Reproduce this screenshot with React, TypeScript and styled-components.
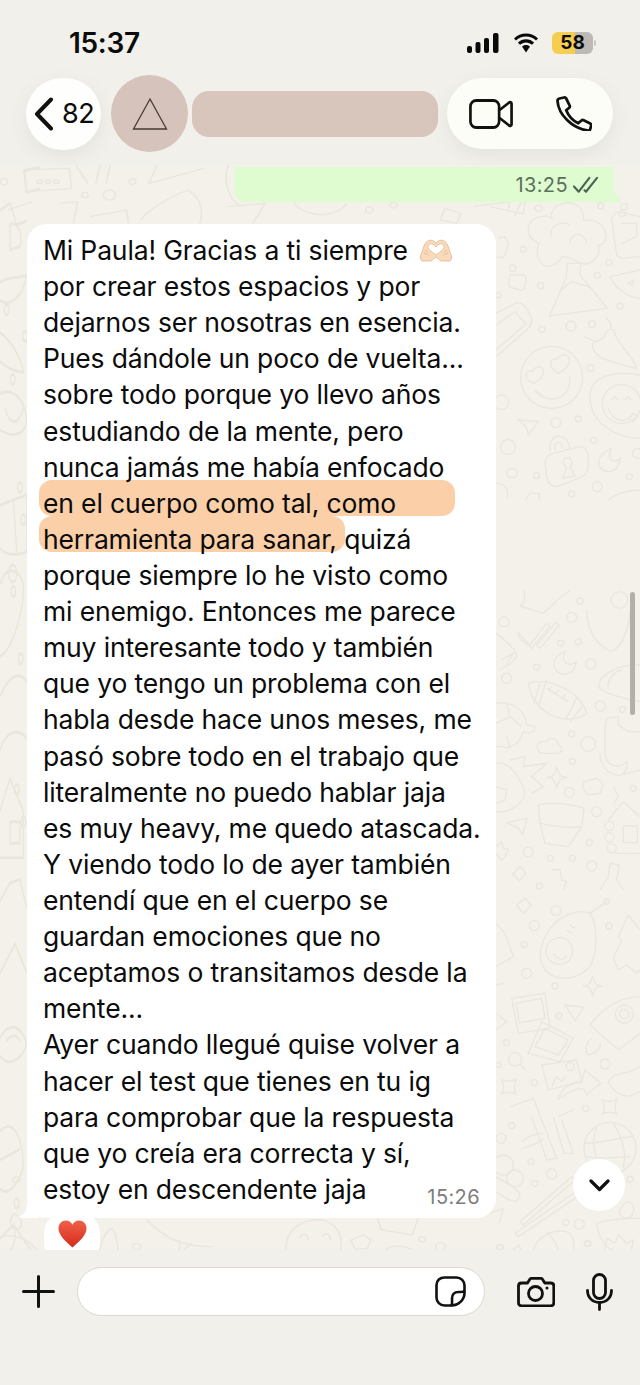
import React from "react";
import styled, { createGlobalStyle } from "styled-components";

const GlobalStyle = createGlobalStyle`
  html, body {
    margin: 0;
    padding: 0;
    width: 640px;
    height: 1385px;
    overflow: hidden;
    background: #f1f0eb;
  }
`;

const lines = [
  "por crear estos espacios y por",
  "dejarnos ser nosotras en esencia.",
  "Pues dándole un poco de vuelta...",
  "sobre todo porque yo llevo años",
  "estudiando de la mente, pero",
  "nunca jamás me había enfocado",
];

const linesAfter = [
  "porque siempre lo he visto como",
  "mi enemigo. Entonces me parece",
  "muy interesante todo y también",
  "que yo tengo un problema con el",
  "habla desde hace unos meses, me",
  "pasó sobre todo en el trabajo que",
  "literalmente no puedo hablar jaja",
  "es muy heavy, me quedo atascada.",
  "Y viendo todo lo de ayer también",
  "entendí que en el cuerpo se",
  "guardan emociones que no",
  "aceptamos o transitamos desde la",
  "mente...",
  "Ayer cuando llegué quise volver a",
  "hacer el test que tienes en tu ig",
  "para comprobar que la respuesta",
  "que yo creía era correcta y sí,",
];

// wallpaper doodles, traced from crops of the picture: each group keeps the crop's own coordinates
type Group = { transform: string; dots: number[][]; paths: string[] };

const star = (x: number, y: number, r: number) =>
  `M${x} ${y - r} C${x + r * 0.2} ${y - r * 0.2} ${x + r * 0.3} ${y} ${x + r} ${y} C${x + r * 0.3} ${y + r * 0.1} ${x + r * 0.2} ${y + r * 0.3} ${x} ${y + r} C${x - r * 0.2} ${y + r * 0.3} ${x - r * 0.3} ${y} ${x - r} ${y} C${x - r * 0.3} ${y} ${x - r * 0.2} ${y - r * 0.2} ${x} ${y - r}Z`;

const doodles: Group[] = [
  {
    transform: "translate(490 200) scale(.3333)",
    dots: [[100,148,9],[357,188,9],[322,226,9],[152,257,9],[390,318,9],[156,388,9],[243,378,15],[306,373,10],[302,504,10],[197,668,15],[265,657,9],[311,721,9],[54,741,22],[66,819,15],[139,827,9],[322,860,15],[245,882,9],[418,830,9],[332,18,9],[34,607,22],[443,760,15],[25,286,8],[185,532,93],[395,612,58],[68,205,10],[403,20,10]],
    paths: [
      "M160 195 C130 170 145 130 150 130 C105 120 100 60 150 50 C170 45 180 50 185 55 C175 10 250 -10 275 30 C285 55 280 60 280 62 C330 50 365 100 340 130 C335 135 330 135 325 135 C335 170 300 200 270 190 C250 175 225 170 215 170 C205 195 175 205 160 195Z",
      "M185 110 C175 80 210 60 240 75 M240 130 C240 100 280 90 290 130",
      "M178 348 L228 235 L232 190 L272 190 L270 225 L352 325 Z",
      "M208 275 C225 265 240 240 250 245 C260 245 265 255 275 255 C290 255 300 262 310 270",
      "M60 225 L100 225 Q110 228 108 240 L102 265 Q98 272 90 270 L62 262 Q54 258 55 250 Z",
      "M18 340 L80 308 Q100 305 115 335 Q135 365 115 385 L18 470 M18 375 L75 335 L108 372 L18 450",
      "M127 515 C105 505 100 540 130 550 C165 535 170 500 145 500 C135 500 130 510 127 515Z",
      "M200 478 C180 470 170 500 205 520 C240 505 250 465 222 465 C212 465 205 470 200 478Z",
      "M135 570 C165 610 240 610 240 530",
      "M450 715 C380 715 300 670 300 590 C300 530 370 510 450 525",
      "M355 625 C370 670 410 670 430 640 M365 600 L375 590 L385 600 M405 600 L415 590 L425 600 M415 655 L430 665 L442 650 L428 638",
      "M280 410 C300 415 305 420 315 425 C295 440 320 470 350 480 C380 490 410 500 440 505 C430 470 400 450 375 405 C378 385 350 380 345 405 C335 425 325 420 315 425",
      "M345 352 C360 360 365 370 362 385",
      "M85 660 L145 665 L115 705 L108 680 Z",
      "M190 760 L270 740 Q290 740 295 765 L295 800 Q290 830 265 835 L200 860 Q175 860 170 830 L165 790 Q165 765 190 760Z",
      "M180 755 C170 700 230 690 240 745 M195 750 C190 720 215 720 218 745",
      "M225 775 C240 765 255 790 240 800 L255 828 L218 835 L230 802 C220 795 215 785 225 775Z",
      "M365 745 C320 760 310 810 355 815 C375 815 390 795 390 775 C375 790 345 785 365 745Z",
      "M450 210 L360 230 C380 270 420 295 450 295 M415 250 L430 240 L428 255Z",
      "M450 50 L380 35 L365 55 L380 165 L395 175 L450 170 M395 70 L440 70 L440 110 L395 130",
      "M0 20 L100 42 L105 5 M60 5 L55 30",
      "M25 115 L45 110 L55 130 L45 165 Q35 178 20 170",
      "M18 850 C45 850 60 870 50 895",
      "M105 900 L120 880 L148 880 L148 900",
      "M355 900 C380 880 420 870 450 870",
    ],
  },
  {
    transform: "translate(490 590) scale(.3333)",
    dots: [[42,95,15],[245,82,15],[212,160,9],[265,155,9],[302,222,15],[140,232,9],[50,265,15],[331,348,15],[397,358,9],[245,432,9],[295,462,22],[247,514,9],[430,595,9],[238,607,15],[320,665,15],[298,758,9],[115,786,15],[181,805,9],[247,805,9],[305,828,15],[148,888,9],[270,33,9],[388,30,25],[358,708,14],[358,742,14],[365,775,14]],
    paths: [
      "M85 130 L120 165 L170 100 L180 108 L125 175 L88 145 Z M140 165 L198 97 L208 105 L150 175Z",
      "M225 185 C180 200 180 250 225 253 C245 250 258 235 258 215 C245 230 210 225 225 185Z",
      "M115 280 C170 260 270 300 290 370 C240 410 130 380 115 280Z",
      "M150 280 L130 345 M170 270 L145 350 M260 325 L225 392 M280 345 L240 395 M170 295 L235 335 M175 300 L187 288 M195 312 L207 300 M215 325 L227 313",
      "M18 340 C70 330 110 370 110 405 L135 410 C135 430 115 430 100 425 C90 460 60 480 40 470 L18 470 M18 400 L60 380 L95 410 M60 380 L50 340 M50 440 L60 475",
      "M145 480 C130 460 165 450 170 455 C180 435 205 450 205 465 C225 470 215 495 195 490 L160 490 C150 490 145 485 145 480Z",
      star(200, 562, 32),
      "M290 60 C290 120 320 170 365 185 C400 170 420 100 420 60",
      "M450 225 C380 220 325 260 325 290 C335 310 400 325 450 335 M355 300 C350 270 370 245 395 240",
      "M345 490 L345 420 L350 385 L385 380 L385 405 L415 425 L450 425 M450 540 L395 555",
      "M330 490 C330 530 360 560 395 555 C410 545 415 525 410 515 C390 540 350 530 345 490",
      "M18 520 C60 510 95 570 105 610 C95 650 50 670 18 665 M60 510 L105 500 L100 530 L170 520 L125 560 L160 590 L125 610 M18 590 L50 600 L45 630 L18 640",
      "M145 645 C190 630 270 650 282 655 L275 710 L235 770 L165 760 L150 700 Z M150 700 C200 710 240 715 275 710",
      "M50 698 L110 685 L98 735 L85 715Z",
      "M280 575 L320 565 Q340 575 338 590 L330 610 L295 615 Q275 600 280 575Z",
      "M450 680 L400 635 L355 690 M400 708 L442 708 L442 758 L400 758Z M375 790 L450 790 M370 590 L385 620 L370 640",
      "M18 770 L35 755 L40 775 L55 778 L45 800 L35 810 L18 790",
      "M90 830 L108 850 L88 872 L68 853Z",
      "M185 840 L210 838 L215 870 L230 875 L220 900",
      "M360 820 L388 825 L380 870 L400 900 M360 820 L355 860 L330 900",
      "M18 130 C50 150 85 190 80 200 C60 230 40 230 30 240 M35 210 L70 190 L50 225",
      "M100 0 C110 30 100 40 90 48 L160 70 C190 40 220 15 240 0",
    ],
  },
  {
    transform: "translate(490 890) scale(.3333)",
    dots: [[197,62,15],[133,107,15],[103,163,9],[357,108,9],[110,250,15],[195,288,9],[207,378,9],[50,458,9],[345,522,15],[133,578,9],[25,525,8],[287,655,9],[65,707,9],[33,745,15],[123,815,9],[185,852,15],[135,880,9],[420,868,9],[227,997,9],[268,1003,15],[293,1060,9],[30,1072,8],[208,183,40],[350,35,8],[403,372,27],[403,372,14],[75,508,20],[360,775,78],[40,825,30],[75,865,25],[240,530,12]],
    paths: [
      "M300 70 C320 100 325 170 305 220 C280 265 210 280 170 245 C130 200 160 130 205 90 C240 65 280 60 300 70Z M300 70 L350 35",
      "M230 120 L245 130 M240 105 L255 115 M190 190 C205 215 225 210 230 195",
      "M415 75 L385 140 L395 150 L370 205 L385 240 L410 225 L440 250 L450 240 M415 75 L450 120",
      star(308, 287, 30),
      "M225 345 L282 352 L255 392Z",
      "M300 405 C340 350 400 320 450 320 M300 405 L385 480 L450 430",
      "M305 445 C285 460 285 490 295 495 C320 490 335 470 330 460",
      "M65 325 L165 310 L180 415 L85 430Z M78 340 L155 325 L165 385 L88 398Z",
      "M155 395 L250 445 L210 515 L115 490Z M165 415 L235 450 L205 495 L135 470Z",
      "M155 525 L260 510 L275 575 L175 600Z M185 590 L200 560 L215 575 L225 560",
      "M205 628 C215 590 250 575 275 575 L285 540 L332 580 L290 615 L280 595 C250 595 225 615 205 628Z",
      "M90 522 L105 540",
      "M35 570 C50 575 65 575 78 567 C72 585 72 600 78 612 C65 605 50 605 35 612 C42 600 42 585 35 570Z",
      "M338 630 C350 635 365 635 380 628 C374 645 374 658 380 672 C365 665 350 665 338 672 C345 658 345 645 338 630Z",
      "M62 650 L130 625 L200 805 L170 810 L125 680 M205 680 L250 660 M215 690 L250 790 L222 790 L190 680",
      "M95 755 C120 735 140 730 160 730 M100 775 C125 765 150 760 160 745",
      "M285 760 C330 760 400 740 430 740 M320 710 C300 770 320 820 340 840 M370 700 C400 750 410 790 400 835 M290 800 C330 810 380 800 420 800",
      "M18 860 C50 880 90 900 90 915 C85 945 60 935 18 905",
      "M90 995 L245 860 L255 870 L100 1005Z M75 1030 L265 900 L270 915 L85 1040Z",
      "M130 1080 C140 1040 190 1015 230 1025 C250 1035 255 1060 250 1080 M170 1025 C190 1045 200 1065 205 1080",
      "M390 960 C400 940 420 920 430 950 C435 975 420 985 405 985 C395 980 385 975 390 960Z",
      "M320 1000 C360 985 420 985 450 985 M320 1000 C325 1040 345 1075 370 1080 M345 1080 L350 1045 L375 1060 L385 1035 L410 1060 L430 1050 L425 1080",
      "M0 970 L40 955 L28 1000",
      "M355 575 C370 550 400 550 420 545 L450 530 M355 575 C365 600 395 620 420 618 L450 605",
      "M18 100 L45 130 L70 200 L18 230 M18 285 L40 280 M18 370 L50 395 L18 420",
      "M105 25 L80 45 L100 70 L125 45Z M70 1080 L85 1065 L95 1080",
    ],
  },
  {
    // strips above and below the big bubble
    transform: "scale(.408 .3333)",
    dots: [[97,545,6],[118,545,6],[138,545,6],[325,545,8],[268,585,15],[208,585,8],[905,630,9],[965,615,9],[1430,590,9],[1320,625,9],[1525,640,9],[10,545,9]],
    paths: [
      "M60 510 L170 505 L175 565 L65 575Z",
      "M185 495 L215 550 M245 495 L235 550 M270 495 L260 550",
      "M385 495 L365 550 L500 505",
      "M345 660 C370 620 420 590 460 570 C490 590 500 630 490 670",
      "M560 495 C545 540 560 600 590 620 M560 620 L650 610 L620 670",
      "M720 610 C760 660 830 650 850 610",
      "M1090 625 L1130 640 L1120 670 L1080 660Z M1160 620 L1280 600 L1260 650",
      "M20 630 L80 605 M150 610 L190 605 L180 670 M220 650 L310 630 L315 670",
    ],
  },
  {
    transform: "translate(0 1150) scale(.408 .3333)",
    dots: [[335,290,10],[1035,268,8],[1225,292,8],[1440,282,8],[1080,290,12],[40,90,9]],
    paths: [
      "M360 210 C400 260 440 290 520 290 M440 270 L440 300 M470 280 L450 300",
      "M700 300 C700 230 750 205 790 210 C830 225 840 260 835 300",
      "M735 265 C740 245 755 250 755 270 M790 260 C795 245 810 250 810 270",
      "M860 270 L890 255 L910 270 L900 295 L870 298Z",
      "M925 205 L935 240 L1010 255 L1025 205",
      "M945 300 C960 280 1000 290 1010 300",
      "M245 300 C250 260 265 240 275 235 C290 260 285 280 290 300",
      "M0 260 C40 250 70 270 90 300 M35 190 C20 210 25 235 40 240 C55 235 60 210 35 190Z",
    ],
  },
  {
    // left edge, the pattern wrapping round
    transform: "translate(0 160) scale(.3333 .7194)",
    dots: [[20,208,7],[75,245,7],[38,305,7],[60,455,7],[40,600,7],[62,693,7],[50,875,7],[70,920,7],[50,1450,7],[38,575,12],[70,500,7]],
    paths: [
      "M70 15 L120 10 M70 15 L80 45 L120 40",
      "M0 70 L30 60 L50 90 L80 85 M30 90 C50 85 70 100 60 120 L30 125 Z",
      "M0 170 C30 160 60 165 80 160 C70 190 30 205 0 195",
      "M0 240 C30 250 60 270 70 295 C40 295 10 285 0 280",
      "M0 325 C40 315 80 335 80 365 C70 385 30 385 0 375 M15 345 C30 370 55 370 70 345",
      "M0 480 L80 465 L80 545 C50 550 20 550 0 540 M40 470 L50 545",
      "M0 590 C20 560 60 570 70 590 C75 620 40 680 0 690",
      "M0 745 C30 715 60 710 80 725 M0 820 C20 790 60 790 80 805",
      "M0 905 L30 860 L70 905 L70 970 L0 970 M30 920 L60 920 L60 950 L30 950Z",
      "M0 1030 L30 1005 L60 1000 L80 1040 M0 1130 L45 1090 L80 1130",
      "M0 1220 C30 1195 70 1205 80 1230 C60 1255 20 1260 0 1245 M20 1225 C30 1215 50 1215 60 1225",
      "M0 1350 C40 1330 70 1360 70 1400 C50 1430 20 1440 0 1430 M0 1390 L60 1375",
      "M0 1500 L40 1480 L100 1520 M40 1480 C60 1510 20 1525 0 1520",
    ],
  },
];

const Doodles = () => (
  <Wallpaper viewBox="0 165 640 1085" aria-hidden="true">
    {doodles.map((g, i) => (
      <g key={i} transform={g.transform}>
        {g.dots.map(([x, y, r], j) => (
          <circle key={j} cx={x} cy={y} r={r} />
        ))}
        {g.paths.map((d, j) => (
          <path key={j} d={d} />
        ))}
      </g>
    ))}
  </Wallpaper>
);

const SignalIcon = () => (
  <svg width="33" height="20" viewBox="0 0 33 20" fill="#0a0a0a">
    <rect x="0" y="13" width="5" height="7" rx="2" />
    <rect x="8.5" y="9" width="5" height="11" rx="2" />
    <rect x="17" y="5" width="5" height="15" rx="2" />
    <rect x="26" y="0" width="5.5" height="20" rx="2" />
  </svg>
);

const WifiIcon = () => (
  <svg width="28" height="20" viewBox="0 0 28 20" fill="#0a0a0a">
    <path d="M14 3.600c3.900 0 7.400 1.500 10 4l2-2.200C22.800 2.200 18.600.4 14 .4S5.200 2.200 2 5.400l2 2.200c2.600-2.500 6.100-4 10-4Z" />
    <path d="M14 9.400c2.300 0 4.400.9 6 2.400l2.100-2.300C20 7.400 17.100 6.200 14 6.200S8 7.400 5.900 9.500L8 11.800c1.600-1.500 3.700-2.400 6-2.400Z" />
    <path d="M14 12c-1.600 0-3 .6-4 1.600l4 6 4-6c-1-1-2.400-1.600-4-1.600Z" />
  </svg>
);

const ChevronLeft = () => (
  <svg width="20" height="34" viewBox="0 0 20 34" fill="none" stroke="#111" strokeWidth="4" strokeLinecap="round" strokeLinejoin="round">
    <path d="M17 2.500 3 17l14 14.500" />
  </svg>
);

const VideoIcon = () => (
  <svg width="44" height="30" viewBox="0 0 46 30" preserveAspectRatio="none" fill="none" stroke="#111" strokeWidth="2.800" strokeLinejoin="round">
    <rect x="1.500" y="1.500" width="30" height="27" rx="6" />
    <path d="M32 11 42 3.500c1-.7 2.500-.2 2.500 1.200v20.600c0 1.400-1.500 1.900-2.500 1.200L32 19" />
  </svg>
);

const PhoneIcon = () => (
  <svg width="36" height="35" viewBox="0 0 36 35" fill="none" stroke="#111" strokeWidth="2.800" strokeLinejoin="round">
    <path d="M3.500 2.500 8 1.500c1-.2 1.800.2 2.200 1l3.400 7c.4.800.2 1.600-.4 2.200l-3 2.600c2.200 5.500 6.500 10.300 12 13l3.300-2.800c.6-.5 1.400-.6 2.200-.2l6.500 3.300c.8.400 1.200 1.200 1 2.100l-1 3.500c-.3 1-1.100 1.500-2.100 1.400C16.500 32.500 2.500 19 1.500 5c0-1.200.7-2.200 2-2.500Z" />
  </svg>
);

const CheckIcon = () => (
  <svg width="25" height="18" viewBox="0 0 26 18" fill="none" stroke="#4c6352" strokeWidth="2.200" strokeLinecap="round" strokeLinejoin="round">
    <path d="M1 10.500 6 16 17 1.500M12 14.500l1.500 1.500L25 1.500" />
  </svg>
);

const HeartHands = () => (
  <svg width="34" height="24" viewBox="0 0 34 24">
    <path
      d="M17 19 12 23H3L1 20 5 8C7 2 13 0 17 5 21 0 27 2 29 8l4 12-2 3H22ZM17 17C12 13 8 11 9 8 10 5 15 5 17 9 19 5 24 5 25 8 26 11 22 13 17 17Z"
      fill="#f9dabb"
      fillRule="evenodd"
      stroke="#e3b48d"
      strokeWidth="0.8"
    />
    <path d="M6 12 9 14M5 15l5 2M28 12l-3 2M29 15l-5 2" fill="none" stroke="#e3b48d" strokeWidth="0.8" />
  </svg>
);

const HeartIcon = () => (
  <svg width="29" height="28" viewBox="0 0 29 28">
    <defs>
      <linearGradient id="heart" x1="0" y1="0" x2="0" y2="1">
        <stop offset="0" stopColor="#f0604a" />
        <stop offset="1" stopColor="#d52c1c" />
      </linearGradient>
    </defs>
    <path d="M14.500 27.500C8 21.500.5 15.500.5 8.500.5 3.500 4 .5 8 .5c3 0 5.300 1.700 6.500 4.300C15.700 2.200 18 .5 21 .5c4 0 7.500 3 7.500 8 0 7-7.500 13-14 19Z" fill="url(#heart)" />
  </svg>
);

const PlusIcon = () => (
  <svg width="33" height="33" viewBox="0 0 33 33" stroke="#111" strokeWidth="3" strokeLinecap="round">
    <path d="M16.500 1.500v30M1.500 16.500h30" />
  </svg>
);

const StickerIcon = () => (
  <svg width="31" height="31" viewBox="0 0 31 31" fill="none" stroke="#111" strokeWidth="2.600" strokeLinejoin="round">
    <path d="M9.500 1.500h12c4.500 0 8 3.500 8 8v7.500c0 7-6.500 12.500-12.500 12.500H9.500c-4.500 0-8-3.500-8-8v-12.500c0-4.500 3.500-7.500 8-7.500Z" />
    <path d="M29.500 15c-1.500 1.500-3.500 1-6 1-4.500 0-6.500 3-6.500 6.500 0 2.500.5 5-.5 7" />
  </svg>
);

const CameraIcon = () => (
  <svg width="38" height="30" viewBox="0 0 38 30" fill="none" stroke="#111" strokeWidth="2.800" strokeLinejoin="round">
    <path d="M4.500 6h6l2.500-4c.4-.5.800-.6 1.400-.6h9.500c.6 0 1 .1 1.400.6l2.500 4h6c1.800 0 3 1.200 3 3v17c0 1.800-1.200 2.800-3 2.800h-29.300c-1.800 0-3-1-3-2.800V9c0-1.800 1.200-3 3-3Z" />
    <circle cx="18.500" cy="16.500" r="7" />
    <circle cx="30" cy="11" r="1.500" fill="#111" stroke="none" />
  </svg>
);

const MicIcon = () => (
  <svg width="27" height="38" viewBox="0 0 27 38" fill="none" stroke="#111" strokeWidth="2.800" strokeLinecap="round">
    <rect x="7.500" y="1.500" width="12" height="24" rx="6" />
    <path d="M1.500 17.500c0 7 5 12 12 12s12-5 12-12M13.500 29.500v7" />
  </svg>
);

const ChevronDown = () => (
  <svg width="21" height="13" viewBox="0 0 21 13" fill="none" stroke="#111" strokeWidth="3.200" strokeLinecap="round" strokeLinejoin="round">
    <path d="m2 2 8.500 8.500L19 2" />
  </svg>
);

export default function App() {
  return (
    <Screen>
      <GlobalStyle />
      <StatusBar>
        <Clock>15:37</Clock>
        <StatusIcons>
          <SignalIcon />
          <WifiIcon />
          <Battery>
            <BatteryLevel>58</BatteryLevel>
          </Battery>
        </StatusIcons>
      </StatusBar>

      <Header>
        <BackPill>
          <ChevronLeft />
          <UnreadCount>82</UnreadCount>
        </BackPill>
        <Avatar>
          <svg width="36" height="34" viewBox="0 0 36 34" fill="none" stroke="#453a36" strokeWidth="1.300">
            <path d="M18 2 34.500 32H1.500Z" />
          </svg>
        </Avatar>
        <NamePlaceholder />
        <CallPill>
          <VideoIcon />
          <PhoneIcon />
        </CallPill>
      </Header>

      <Chat>
        <Doodles />
        <SentBubble>
          <SentTime>13:25</SentTime>
          <CheckIcon />
        </SentBubble>
        <Bubble>
          <FirstLine>
            Mi Paula! Gracias a ti siempre
            <HeartHands />
          </FirstLine>
          {lines.map((line) => (
            <Line key={line}>{line}</Line>
          ))}
          <Line>
            <Mark $width={416}>en el cuerpo como tal, como</Mark>
          </Line>
          <Line>
            <Mark $width={306}>herramienta para sanar,</Mark> quizá
          </Line>
          {linesAfter.map((line) => (
            <Line key={line}>{line}</Line>
          ))}
          <LastLine>
            estoy en descendente jaja
            <BubbleTime>15:26</BubbleTime>
          </LastLine>
        </Bubble>
        <Reaction>
          <HeartIcon />
        </Reaction>
        <ScrollThumb />
        <DownButton>
          <ChevronDown />
        </DownButton>
      </Chat>

      <Composer>
        <PlusIcon />
        <InputBox>
          <StickerIcon />
        </InputBox>
        <ComposerActions>
          <CameraIcon />
          <MicIcon />
        </ComposerActions>
      </Composer>
    </Screen>
  );
}

const Screen = styled.div`
  display: flex;
  flex-direction: column;
  width: 640px;
  height: 1385px;
  overflow: hidden;
  background: #f1f0eb;
  color: #0b0b0b;
  font-family: Inter, "Liberation Sans", sans-serif;
`;

const StatusBar = styled.div`
  display: flex;
  align-items: center;
  justify-content: space-between;
  height: 75px;
  padding: 10px 47px 0 69px;
  box-sizing: border-box;
`;

const Clock = styled.span`
  font-size: 28px;
  font-weight: 600;
  letter-spacing: -0.3px;
`;

const StatusIcons = styled.div`
  display: flex;
  align-items: center;
  gap: 12px;
`;

const Battery = styled.div`
  position: relative;
  display: flex;
  align-items: center;
  justify-content: center;
  width: 41px;
  height: 22px;
  border-radius: 6px;
  background: linear-gradient(90deg, #f5cd4f 0 56%, #bdbab5 56% 100%);

  &::after {
    content: "";
    position: absolute;
    top: 8px;
    right: -3px;
    width: 2px;
    height: 6px;
    border-radius: 0 2px 2px 0;
    background: #c9c7c2;
  }
`;

const BatteryLevel = styled.span`
  font-size: 19px;
  font-weight: 700;
`;

const Header = styled.div`
  display: flex;
  align-items: center;
  height: 77px;
  margin-bottom: 13px;
  padding-left: 26px;
`;

const BackPill = styled.div`
  display: flex;
  align-items: center;
  gap: 8px;
  width: 75px;
  height: 72px;
  padding-left: 8px;
  box-sizing: border-box;
  border-radius: 36px;
  background: #fefefc;
  box-shadow: 0 6px 18px rgba(120, 120, 110, 0.1);
`;

const UnreadCount = styled.span`
  font-size: 27px;
  letter-spacing: -0.5px;
`;

const Avatar = styled.div`
  display: flex;
  align-items: center;
  justify-content: center;
  width: 77px;
  height: 77px;
  margin-left: 10px;
  border-radius: 50%;
  background: #d6c3bb;
`;

const NamePlaceholder = styled.div`
  width: 246px;
  height: 46px;
  margin-left: 4px;
  border-radius: 17px;
  background: #d8c5bc;
`;

const CallPill = styled.div`
  display: flex;
  align-items: center;
  justify-content: space-between;
  width: 166px;
  height: 71px;
  margin-left: 9px;
  padding: 0 21px 0 22px;
  box-sizing: border-box;
  border-radius: 36px;
  background: #fdfdf7;
  box-shadow: 0 6px 18px rgba(120, 120, 110, 0.1);
`;

const Chat = styled.div`
  position: relative;
  flex: 1;
  overflow: hidden;
  padding-top: 2px;
  background: #f4f1eb;
`;

const Wallpaper = styled.svg`
  position: absolute;
  inset: 0;
  width: 640px;
  height: 1085px;
  fill: none;
  stroke: #e9e6dd;
  stroke-width: 4;
`;

const SentBubble = styled.div`
  position: relative;
  display: flex;
  align-items: center;
  justify-content: flex-end;
  gap: 5px;
  width: 380px;
  height: 35px;
  margin-left: 234px;
  padding-right: 16px;
  box-sizing: border-box;
  border-radius: 0 0 0 12px;
  background: #dffbd0;

  &::after {
    content: "";
    position: absolute;
    right: -8px;
    bottom: 0;
    width: 8px;
    height: 10px;
    background: #dffbd0;
    clip-path: polygon(0 0, 100% 100%, 0 100%);
  }
`;

const SentTime = styled.span`
  font-size: 20px;
  letter-spacing: 0.4px;
  color: #5b705d;
`;

const Bubble = styled.div`
  position: relative;
  isolation: isolate;
  width: 469px;
  margin: 22px 0 0 27px;
  padding: 8px 0 11px 16px;
  box-sizing: border-box;
  border-radius: 20px;
  background: #fff;
  font-size: 26.5px;
  letter-spacing: -0.15px;

  &::before {
    content: "";
    position: absolute;
    left: -10px;
    bottom: 0;
    width: 22px;
    height: 14px;
    background: #fff;
    clip-path: path("M10 0 C10 8 6 12 0 13 C6 15 14 14 22 14 L22 0 Z");
  }
`;

const Line = styled.div`
  height: 36.12px;
  line-height: 36.12px;
  white-space: nowrap;
`;

const FirstLine = styled(Line)`
  display: flex;
  align-items: center;
  gap: 11px;
`;

const LastLine = styled(Line)`
  display: flex;
  justify-content: space-between;
  padding-right: 16px;
`;

const Mark = styled.span<{ $width: number }>`
  position: relative;

  &::before {
    content: "";
    position: absolute;
    z-index: -1;
    top: -7px;
    left: -4px;
    width: ${(p) => p.$width}px;
    height: 36px;
    border-radius: 13px;
    background: #fbcfa8;
  }
`;

const BubbleTime = styled.span`
  align-self: flex-end;
  font-size: 20px;
  letter-spacing: 0.4px;
  line-height: 20px;
  color: #7d7d7d;
`;

const Reaction = styled.div`
  position: absolute;
  left: 44px;
  top: 1048px;
  display: flex;
  justify-content: center;
  width: 56px;
  height: 50px;
  padding-top: 7px;
  box-sizing: border-box;
  border-radius: 20px;
  background: #fff;
`;

const ScrollThumb = styled.div`
  position: absolute;
  top: 427px;
  right: 5px;
  width: 5px;
  height: 123px;
  border-radius: 3px;
  background: #b3b0aa;
`;

const DownButton = styled.div`
  position: absolute;
  top: 994px;
  left: 573px;
  display: flex;
  align-items: center;
  justify-content: center;
  width: 52px;
  height: 52px;
  border-radius: 50%;
  background: #fff;
`;

const Composer = styled.div`
  display: flex;
  align-items: center;
  flex-shrink: 0;
  gap: 22px;
  height: 135px;
  padding: 0 0 52px 22px;
  box-sizing: border-box;
`;

const InputBox = styled.div`
  display: flex;
  align-items: center;
  justify-content: flex-end;
  width: 408px;
  height: 49px;
  padding-right: 18px;
  box-sizing: border-box;
  border: 1px solid #d9d8d0;
  border-radius: 25px;
  background: #fff;
`;

const ComposerActions = styled.div`
  display: flex;
  align-items: center;
  gap: 31px;
  margin-left: 10px;
`;
